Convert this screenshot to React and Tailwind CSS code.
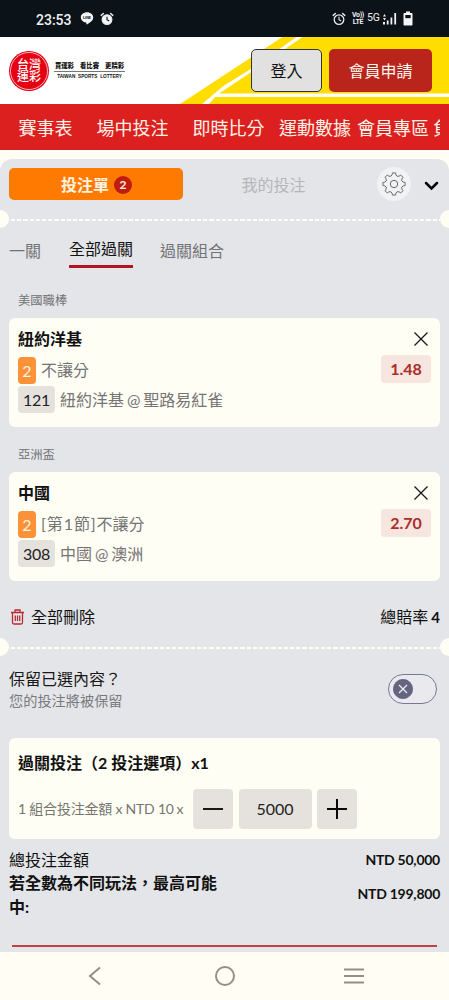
import React from "react";

function AlarmIcon({ solid }) {
  return (
    <svg width="14" height="14" viewBox="0 0 14 14" fill="none" stroke="#e8ecee" strokeLinecap="round">
      <circle cx="7" cy="7.6" r="4.8" strokeWidth="1.3" fill={solid ? "#f4f6f7" : "none"} />
      <path d="M1.2 3.4 3.4 1.5M12.8 3.4 10.6 1.5" strokeWidth="1.4" />
      <path d="M7 5v2.8l1.8 1" strokeWidth="1.1" stroke={solid ? "#0b1218" : "#e8ecee"} />
    </svg>
  );
}

function StatusBar() {
  return (
    <div className="flex h-[37px] shrink-0 items-center bg-[#0b1218] pr-[36px] pl-9 font-['Roboto','Noto_Sans_CJK_TC',sans-serif] text-[#eef1f3]">
      <span className="w-[36px] pt-0.5 text-sm leading-none font-medium">23:53</span>
      <svg className="ml-[8px]" width="14" height="13" viewBox="0 0 13 13">
        <path d="M6.5.3C3 .3.3 2.6.3 5.4c0 2.600 2.200 4.600 5.200 5 .5.1.5.6.4 1.600 0 .5.300.6.8.3 2.500-1.500 6-3.800 6-6.900C12.700 2.600 10 .3 6.500.3Z" fill="#f4f6f7" />
        <text x="6.5" y="6.8" textAnchor="middle" fontSize="3.8" fontWeight="700" fill="#0b1218">LINE</text>
      </svg>
      <span className="ml-[6px]"><AlarmIcon solid /></span>
      <div className="ml-auto flex items-center">
        <AlarmIcon />
        <span className="ml-[6px] w-3 pt-px text-center text-[7px] leading-[7px] font-bold tracking-tighter">Vo)) LTE</span>
        <span className="ml-[3px] text-[10.500px] leading-none">5G</span>
        <svg className="ml-[3px]" width="14" height="13" viewBox="0 0 14 13" fill="#eef1f3">
          <path d="M0 4.500 1.500 2 3 4.500ZM0 6 1.500 8.500 3 6ZM0 10h2v2.500H0zM3.800 8.500h1.800v4H3.800zM7.500 5.500h1.800v7H7.500zM11.300 1h1.800v11.500h-1.800z" />
        </svg>
        <svg className="ml-[6px]" width="10" height="15" viewBox="0 0 10 15">
          <path d="M3 .5h4v1.500h1.700q.8 0 .8.8v10.900q0 .8-.8.8H1.300q-.8 0-.8-.8V2.800q0-.8.8-.8H3Z" fill="#f4f6f7" />
          <path d="M2.300 4h5.400v3.200H2.300z" fill="#0b1218" />
        </svg>
      </div>
    </div>
  );
}

function Header() {
  return (
    <header className="relative flex h-[67px] shrink-0 items-center bg-white pr-[17px] pl-[9px]">
      <svg className="absolute inset-0" width="449" height="67" viewBox="0 1 449 67">
        <path d="M180 68 284 0H449V68Z" fill="#ffdd00" />
        <path d="M202 68 224 49.500 250 33.500 298 0H304L250 37 219 57.500H449V61H215L209 68Z" fill="#fff" />
      </svg>
      <div className="relative flex size-10 items-center justify-center rounded-full bg-[#e50012]">
        <div className="flex size-[38px] items-center justify-center rounded-full border border-[#f9b5b5]">
          <span className="w-6 text-[12px] leading-[12px] font-medium break-all text-white">台灣運彩</span>
        </div>
      </div>
      <div className="relative ml-[5px] flex w-[71px] flex-col items-center whitespace-nowrap text-[#111]">
        <div className="flex w-full justify-between pr-px pl-px text-[6.300px] leading-[11px] font-black">
          <span>買運彩</span>
          <span>看比賽</span>
          <span>更精彩</span>
        </div>
        <div className="h-px w-full bg-[#777]" />
        <span className="font-['Liberation_Sans',sans-serif] text-[4.700px] leading-[9px] font-bold [word-spacing:1.500px]">TAIWAN SPORTS LOTTERY</span>
      </div>
      <button className="relative ml-auto h-[43px] w-[71px] rounded-[5px] border border-[#333] bg-[#e1e1e1] pt-px text-base text-[#111]">登入</button>
      <button className="relative ml-[7px] h-[43px] w-[103px] rounded-[5px] bg-[#b9251a] pt-px text-base text-[#fff6ee]">會員申請</button>
    </header>
  );
}

function Nav() {
  return (
    <nav className="flex h-[46px] shrink-0 items-center bg-[#dc1f1f] pt-px pr-[9px] pl-[18.500px] text-lg text-[#fff3e8]">
      <div className="flex flex-1 overflow-hidden whitespace-nowrap">
        <span className="w-[78px] shrink-0">賽事表</span>
        <span className="w-[96px] shrink-0">場中投注</span>
        <span className="w-[86.500px] shrink-0">即時比分</span>
        <span className="w-[78px] shrink-0">運動數據</span>
        <span className="w-[76px] shrink-0">會員專區</span>
        <span className="shrink-0">負責</span>
      </div>
    </nav>
  );
}

function Perforation() {
  return (
    <div className="flex h-[18px] shrink-0 items-center overflow-hidden">
      <div className="-ml-[9px] size-[18px] shrink-0 rounded-full bg-[#fffef5]" />
      <div className="mt-px h-[2px] flex-1 bg-[repeating-linear-gradient(90deg,transparent_0_2px,#fffef5_2px_6.200px)]" />
      <div className="-mr-[9px] size-[18px] shrink-0 rounded-full bg-[#fffef5]" />
    </div>
  );
}

const teeth = Array.from({ length: 8 }, (_, i) => {
  const p = (r, d) => {
    const a = ((i * 45 + d - 90) * Math.PI) / 180;
    return `${(12 + r * Math.cos(a)).toFixed(2)} ${(12 + r * Math.sin(a)).toFixed(2)}`;
  };
  return `${i ? "L" : "M"}${p(9.4, -12)}L${p(11.2, -8)}L${p(11.2, 8)}L${p(9.4, 12)}Q${p(7.4, 22.5)} ${p(9.4, 33)}`;
}).join("") + "Z";

function Tabs() {
  return (
    <div className="flex h-[34px] shrink-0 items-center pr-[10px] pl-[9px]">
      <button className="flex h-8 w-[174px] items-center justify-center gap-[5px] rounded-[5px] bg-[#ff7a00] pt-px pl-px text-base font-bold text-[#fff3e0]">
        <span>投注單</span>
        <span className="flex size-[18px] items-center justify-center rounded-full bg-[#c01c10] text-xs leading-none">2</span>
      </button>
      <span className="w-[181px] pt-px text-center text-base text-[#b4b6b8]">我的投注</span>
      <span className="ml-[13px] flex size-[34px] items-center justify-center rounded-full bg-[#f1f2f4]">
        <svg width="24" height="24" viewBox="0 0 24 24" fill="none" stroke="#666a6e" strokeWidth="1" strokeLinejoin="round">
          <path d={teeth} />
          <circle cx="12" cy="12" r="3.7" />
        </svg>
      </span>
      <svg className="mt-[3px] ml-auto" width="15" height="10" viewBox="0 0 15 10" fill="none" stroke="#080808" strokeWidth="2.500" strokeLinecap="round">
        <path d="m2 2 5.500 5.500L13 2" />
      </svg>
    </div>
  );
}

function Bet({ league, team, market, code, match, odds }) {
  return (
    <section className="px-[9px]">
      <h3 className="h-[29px] pl-[9px] text-[12.300px] leading-[24px] text-[#717376]">{league}</h3>
      <div className="flex h-[109px] justify-between rounded-md bg-[#fffef5] px-[9px] pt-[10px]">
        <div className="flex flex-col items-start whitespace-nowrap">
          <div className="h-[29px] text-base leading-[22px] font-bold text-[#111]">{team}</div>
          <div className="flex h-[29px] items-start">
            <span className="flex h-[27px] w-[18px] items-center justify-center rounded bg-[#fb9238] text-base text-[#fff3e0]">2</span>
            <span className="ml-[5px] text-base leading-[26px] text-[#747474]">{market}</span>
          </div>
          <div className="flex h-[27px] items-start">
            <span className="flex h-[27px] w-[37px] items-center justify-center rounded bg-[#e5e2de] text-base tracking-[-0.300px] text-[#222]">{code}</span>
            <span className="ml-[5px] text-base leading-[27px] text-[#747474] [word-spacing:-1.200px]">{match}</span>
          </div>
        </div>
        <div className="flex flex-col items-end">
          <svg className="mt-[4px] mr-[3px] mb-[9px]" width="14" height="14" viewBox="0 0 14 14" fill="none" stroke="#181818" strokeWidth="1.300">
            <path d="m.5.5 13 13M13.500.5l-13 13" />
          </svg>
          <span className="flex h-7 w-[50px] items-center justify-center rounded bg-[#f7e5df] text-base font-bold text-[#aa2d2a]">{odds}</span>
        </div>
      </div>
    </section>
  );
}

function Stake() {
  return (
    <section className="mx-[9px] h-[101px] shrink-0 rounded-md bg-[#fffef5] px-[9px] pt-[13px] whitespace-nowrap">
      <h3 className="h-[38px] text-base leading-6 font-bold text-[#111]">過關投注（2 投注選項）x1</h3>
      <div className="flex items-center">
        <div className="flex w-[175px] shrink-0 items-baseline text-sm text-[#76766f]">
          <span className="w-[107.500px] tracking-[-0.200px]">1 組合投注金額 x</span>
          <span className="w-[51px] tracking-[-0.200px]">NTD 10</span>
          <span>x</span>
        </div>
        <button className="flex size-10 shrink-0 items-center justify-center rounded bg-[#e5e2de]">
          <svg width="20" height="20" viewBox="0 0 20 20" stroke="#181818" strokeWidth="2"><path d="M0 10h20" /></svg>
        </button>
        <span className="mx-[5.500px] flex h-10 w-[73px] items-center justify-center rounded bg-[#e5e2de] text-base text-[#222]">5000</span>
        <button className="flex size-10 shrink-0 items-center justify-center rounded bg-[#e5e2de]">
          <svg width="20" height="20" viewBox="0 0 20 20" stroke="#080808" strokeWidth="2"><path d="M0 10h20M10 0v20" /></svg>
        </button>
      </div>
    </section>
  );
}

export default function App() {
  return (
    <div className="flex h-[1000px] w-[449px] flex-col overflow-hidden bg-[#fffdf4] font-['Lato','Noto_Sans_CJK_TC',sans-serif]">
      <StatusBar />
      <Header />
      <Nav />
      <main className="mt-[9px] flex h-[793px] shrink-0 flex-col overflow-hidden rounded-t-xl bg-[#e4e5e8] pt-2">
        <Tabs />
        <div className="h-[9px] shrink-0" />
        <Perforation />
        <div className="flex h-10 shrink-0 gap-7 px-[9px] pt-[9px] text-base text-[#717376]">
          <span className="pt-[2px]">一關</span>
          <span className="h-[31px] border-b-[3px] border-[#b31424] text-[#111]">全部過關</span>
          <span className="-ml-px pt-[2px]">過關組合</span>
        </div>
        <div className="mt-[21px]">
          <Bet
            league="美國職棒"
            team="紐約洋基"
            market="不讓分"
            code="121"
            match="紐約洋基 @ 聖路易紅雀"
            odds="1.48"
          />
        </div>
        <div className="mt-4">
          <Bet
            league="亞洲盃"
            team="中國"
            market={<><span className="tracking-[0.900px]">[第1節]</span>不讓分</>}
            code="308"
            match="中國 @ 澳洲"
            odds="2.70"
          />
        </div>
        <div className="mt-[23px] flex h-[25px] shrink-0 items-center justify-between pr-[9px] pl-[11px] text-base text-[#111]">
          <div className="flex items-center gap-[7px]">
            <svg width="13" height="16" viewBox="0 0 13 16" fill="none" stroke="#b92a30" strokeWidth="1.300">
              <path d="M0 3.500h13M4 3.500V1h5v2.500M1.500 3.500v10q0 1.500 1.500 1.500h7q1.500 0 1.500-1.500v-10M4.300 6.500v5.500M6.500 6.500v5.500M8.700 6.500v5.500" />
            </svg>
            <span>全部刪除</span>
          </div>
          <span className="[word-spacing:-1px]">總賠率 <span className="text-[15px] font-bold">4</span></span>
        </div>
        <div className="h-[9px] shrink-0" />
        <Perforation />
        <div className="mt-[11px] flex h-[47px] shrink-0 justify-between pr-[12px] pl-[9px]">
          <div>
            <div className="text-base leading-6 text-[#181818]">保留已選內容？</div>
            <div className="text-[14.200px] leading-5 text-[#77797c]">您的投注將被保留</div>
          </div>
          <div className="mt-[7px] flex h-[30px] w-[49px] items-center rounded-full border border-[#77779a] bg-[#e9e9ee] pl-1">
            <svg width="20" height="20" viewBox="0 0 20 20">
              <circle cx="10" cy="10" r="9.700" fill="#65657f" stroke="#50507a" strokeWidth=".6" />
              <path d="m6 6 8 8M14 6l-8 8" stroke="#eeeef5" strokeWidth="1.200" />
            </svg>
          </div>
        </div>
        <div className="h-6 shrink-0" />
        <Stake />
        <div className="mt-[9px] px-[9px] text-base text-[#111]">
          <div className="flex h-[23px] items-center justify-between">
            <span>總投注金額</span>
            <span className="text-sm font-bold tracking-[-0.250px]">NTD 50,000</span>
          </div>
          <div className="flex justify-between font-bold">
            <span className="w-[212px] leading-[23.500px]">若全數為不同玩法，最高可能中:</span>
            <span className="text-sm leading-[46px] tracking-[-0.250px]">NTD 199,800</span>
          </div>
        </div>
        <div className="mx-3 mt-[27px] h-[1.500px] shrink-0 bg-[#bd4347]" />
      </main>
      <footer className="flex h-12 shrink-0 items-center justify-between px-[85px]">
        <svg width="20" height="20" viewBox="0 0 20 20" fill="none" stroke="#929089" strokeWidth="2"><path d="M15 1.500 5 10l10 8.500" /></svg>
        <svg width="20" height="20" viewBox="0 0 20 20" fill="none" stroke="#929089" strokeWidth="2"><circle cx="10" cy="10" r="9" /></svg>
        <svg width="20" height="20" viewBox="0 0 20 20" fill="none" stroke="#929089" strokeWidth="2"><path d="M0 3.500h20M0 10h20M0 16.500h20" /></svg>
      </footer>
    </div>
  );
}
